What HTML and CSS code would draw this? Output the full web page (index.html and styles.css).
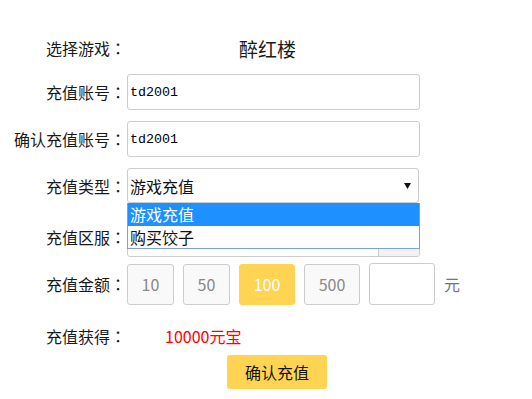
FILE: index.html
```
<!DOCTYPE html>
<html lang="zh-CN">
<head>
    <meta charset="UTF-8">
    <meta name="viewport" content="width=device-width, initial-scale=1.0">
    <title>游戏充值</title>
    <link rel="stylesheet" href="styles.css">
</head>
<body>
    <div class="formulario">
        <div class="fila fila-juego">
            <span class="etiqueta">选择游戏<span class="dos-puntos" lang="zh-TW">：</span></span>
            <span class="nombre-juego">醉红楼</span>
        </div>
        <div class="fila fila-cuenta">
            <span class="etiqueta">充值账号<span class="dos-puntos" lang="zh-TW">：</span></span>
            <input class="campo" type="text" value="td2001">
        </div>
        <div class="fila fila-cuenta2">
            <span class="etiqueta">确认充值账号<span class="dos-puntos" lang="zh-TW">：</span></span>
            <input class="campo" type="text" value="td2001">
        </div>
        <div class="fila fila-tipo">
            <span class="etiqueta">充值类型<span class="dos-puntos" lang="zh-TW">：</span></span>
            <div class="selector">
                <div class="selector-caja">
                    <span>游戏充值</span>
                    <svg class="flecha" width="7" height="6" viewBox="0 0 7 6"><polygon points="0,0 7,0 3.5,6" fill="#111"/></svg>
                </div>
                <!-- lista desplegada -->
                <ul class="selector-lista">
                    <li class="activo">游戏充值</li>
                    <li>购买饺子</li>
                </ul>
            </div>
        </div>
        <div class="fila fila-servidor">
            <span class="etiqueta">充值区服<span class="dos-puntos" lang="zh-TW">：</span></span>
            <div class="servidor-caja">
                <span class="servidor-texto"></span>
                <span class="servidor-boton"></span>
            </div>
        </div>
        <div class="fila fila-monto">
            <span class="etiqueta">充值金额<span class="dos-puntos" lang="zh-TW">：</span></span>
            <div class="montos">
                <button class="monto">10</button>
                <button class="monto">50</button>
                <button class="monto monto-ancho monto-activo">100</button>
                <button class="monto monto-ancho">500</button>
                <input class="monto-otro" type="text">
                <span class="moneda">元</span>
            </div>
        </div>
        <div class="fila fila-obtener">
            <span class="etiqueta">充值获得<span class="dos-puntos" lang="zh-TW">：</span></span>
            <span class="obtener-valor">10000元宝</span>
        </div>
        <div class="fila-boton">
            <button class="boton-confirmar">确认充值</button>
        </div>
    </div>
</body>
</html>
```
FILE: styles.css
```
body {
    margin: 0;
    background-color: #fff;
    font-family: "Noto Sans CJK SC", sans-serif;
    color: #1a1a1a;
}

.formulario {
    padding-top: 30px;
    width: 532px;
}

.fila {
    display: flex;
    align-items: center;
}

.etiqueta {
    width: 127px;
    padding-right: 1px;
    box-sizing: border-box;
    text-align: right;
    font-size: 16px;
    white-space: nowrap;
    flex-shrink: 0;
}

/* los dos puntos centrados, como en la captura */
.dos-puntos {
    font-family: "Noto Sans CJK TC", sans-serif;
}

.fila-juego {
    height: 36px;
    margin-bottom: 8px;
}

.nombre-juego {
    font-size: 19px;
    margin-left: 112px;
}

.fila-cuenta,
.fila-cuenta2 {
    height: 36px;
    margin-bottom: 11px;
}

.campo {
    width: 293px;
    height: 36px;
    box-sizing: border-box;
    margin: 0;
    padding: 1px 2px;
    border: 1px solid #ccc;
    border-radius: 3px;
    font-family: "Liberation Mono", monospace;
    font-size: 13.33px;
    color: #000;
    outline: none;
}

.fila-tipo {
    height: 35px;
    margin-bottom: 13px;
    position: relative;
    z-index: 2;
}

.selector {
    position: relative;
    width: 292px;
}

.selector-caja {
    height: 35px;
    box-sizing: border-box;
    border: 1px solid #ccc;
    border-radius: 3px;
    display: flex;
    align-items: center;
    justify-content: space-between;
    padding: 0 7px 0 2px;
    font-size: 16px;
    color: #111;
}

.flecha {
    display: block;
}

.selector-lista {
    position: absolute;
    top: 35px;
    left: 0;
    right: -1px;
    margin: 0;
    padding: 0;
    list-style: none;
    background-color: #fff;
    border: 1px solid #7f9fd6;
    border-top: none;
    font-size: 16px;
}

.selector-lista li {
    height: 22.5px;
    line-height: 22.5px;
    padding-left: 2px;
    color: #111;
}

.selector-lista li.activo {
    background-color: #1e90ff;
    color: #fff;
}

.fila-servidor {
    height: 41px;
    margin-bottom: 6px;
}

.servidor-caja {
    width: 293px;
    height: 41px;
    box-sizing: border-box;
    border: 1px solid #ccc;
    border-radius: 3px;
    display: flex;
    overflow: hidden;
}

.servidor-texto {
    flex: 1;
}

.servidor-boton {
    width: 40px;
    background-color: #f2f2f2;
    border-left: 1px solid #ccc;
}

.fila-monto {
    height: 42px;
}

.montos {
    display: flex;
    align-items: center;
    gap: 9px;
}

.monto {
    width: 47px;
    height: 41px;
    margin: 0;
    padding: 0;
    border: 1px solid #ccc;
    border-radius: 3px;
    background-color: #f9f9f9;
    font-family: "Noto Sans CJK SC", sans-serif;
    font-size: 16px;
    color: #888;
    cursor: pointer;
}

.monto-ancho {
    width: 56px;
}

.monto-activo {
    background-color: #ffd452;
    border-color: #ffd452;
    color: #fff;
}

.monto-otro {
    width: 66px;
    height: 42px;
    box-sizing: border-box;
    margin: 0;
    border: 1px solid #ccc;
    border-radius: 3px;
    outline: none;
}

.moneda {
    font-size: 16px;
    color: #777;
}

.fila-obtener {
    height: 30px;
    margin-top: 16px;
    margin-bottom: 4px;
}

.obtener-valor {
    margin-left: 38px;
    font-size: 16px;
    color: #f00;
}

.fila-boton {
    padding-left: 227px;
}

.boton-confirmar {
    width: 100px;
    height: 34px;
    margin: 0;
    padding: 0;
    border: none;
    border-radius: 3px;
    background-color: #ffd452;
    font-family: "Noto Sans CJK SC", sans-serif;
    font-size: 16px;
    color: #111;
    cursor: pointer;
}
```
